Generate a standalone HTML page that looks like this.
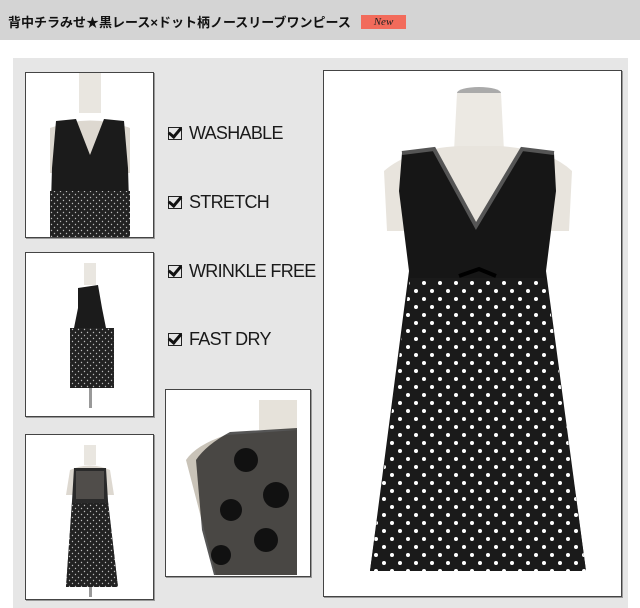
<!DOCTYPE html>
<html><head><meta charset="utf-8"><style>
body{margin:0;width:640px;height:602px;background:#fff;position:relative;overflow:hidden;font-family:"Liberation Sans","Noto Sans CJK JP",sans-serif}
.hdr{position:absolute;left:0;top:0;width:640px;height:40px;background:#d4d4d4}
.hdr .t{position:absolute;left:8px;top:12px;font-size:13px;font-weight:bold;color:#111}
.new{position:absolute;left:361px;top:15px;width:45px;height:14px;background:#f26b5b;color:#222;font-family:"Liberation Serif",serif;font-style:italic;font-size:11px;text-align:center;line-height:14px}
.panel{position:absolute;left:13px;top:58px;width:615px;height:550px;background:#e6e6e6}
.f{position:absolute;background:#fff;border:1px solid #444;box-shadow:1px 1px 0 #999;overflow:hidden}
.f svg{position:absolute;left:0;top:0}
.feat{position:absolute;left:168px;font-size:18px;color:#1a1a1a;letter-spacing:-0.7px;white-space:nowrap}
.cb{display:inline-block;width:12px;height:11px;border:1.5px solid #222;vertical-align:-1px;margin-right:7px;position:relative}
.cb:after{content:"";position:absolute;left:2px;top:-3px;width:5px;height:10px;border-right:3px solid #111;border-bottom:3px solid #111;transform:rotate(40deg)}
</style></head><body>
<div class="hdr"><div class="t">背中チラみせ★黒レース×ドット柄ノースリーブワンピース</div><div class="new">New</div></div>
<div class="panel"></div>
<svg width="0" height="0" style="position:absolute"><defs>
<pattern id="dots" width="16" height="16" patternUnits="userSpaceOnUse"><rect width="16" height="16" fill="#1a1a1a"/><circle cx="4" cy="4" r="2" fill="#fff"/><circle cx="12" cy="12" r="2" fill="#fff"/></pattern>
<pattern id="sdots" width="6" height="6" patternUnits="userSpaceOnUse"><rect width="6" height="6" fill="#222"/><circle cx="1.5" cy="1.5" r=".7" fill="#bbb"/><circle cx="4.5" cy="4.5" r=".7" fill="#bbb"/></pattern>
</defs></svg>

<div class="f" style="left:25px;top:72px;width:127px;height:164px">
<svg width="127" height="164"><rect x="53" y="0" width="22" height="40" fill="#e9e6e0"/>
<path d="M24 55 Q64 40 104 55 L104 100 L24 100 Z" fill="#ddd8d0"/>
<path d="M30 48 L50 46 L64 82 L78 46 L98 48 L102 95 L104 164 L24 164 L26 95 Z" fill="#1b1b1b"/>
<rect x="24" y="118" width="80" height="46" fill="url(#sdots)"/></svg></div>
<div class="f" style="left:25px;top:252px;width:127px;height:163px">
<svg width="127" height="163"><rect x="58" y="10" width="12" height="22" fill="#e9e6e0"/>
<path d="M52 35 L72 32 L76 55 L80 75 L88 135 L44 135 L48 75 L52 55 Z" fill="#1b1b1b"/>
<rect x="44" y="75" width="44" height="60" fill="url(#sdots)"/><rect x="63" y="135" width="3" height="20" fill="#999"/></svg></div>
<div class="f" style="left:25px;top:434px;width:127px;height:164px">
<svg width="127" height="164"><rect x="58" y="10" width="12" height="20" fill="#e9e6e0"/>
<path d="M44 35 Q64 26 84 35 L88 60 L40 60 Z" fill="#ddd8d0"/>
<path d="M48 33 L80 33 L82 66 L92 152 L40 152 L46 66 Z" fill="#2a2a2a"/>
<rect x="50" y="36" width="28" height="28" fill="#6a6560" opacity=".6"/>
<path d="M46 68 L82 68 L92 152 L40 152 Z" fill="url(#sdots)"/><rect x="63" y="152" width="3" height="10" fill="#999"/></svg></div>
<div class="f" style="left:165px;top:389px;width:144px;height:186px">
<svg width="144" height="186"><rect x="93" y="10" width="38" height="30" fill="#e6e2da"/>
<path d="M20 70 Q30 55 60 45 L131 40 L131 185 L50 185 Z" fill="#c9c3b8"/>
<path d="M30 70 Q40 55 64 42 L131 38 L131 185 L48 185 L36 140 Z" fill="#1e1e1e" opacity=".75"/>
<g fill="#111"><circle cx="80" cy="70" r="12"/><circle cx="110" cy="105" r="13"/><circle cx="65" cy="120" r="11"/><circle cx="100" cy="150" r="12"/><circle cx="55" cy="165" r="10"/></g></svg></div>

<div class="feat" style="top:123px"><span class="cb"></span>WASHABLE</div>
<div class="feat" style="top:192px"><span class="cb"></span>STRETCH</div>
<div class="feat" style="top:261px"><span class="cb"></span>WRINKLE FREE</div>
<div class="feat" style="top:329px"><span class="cb"></span>FAST DRY</div>

<div class="f" style="left:323px;top:70px;width:297px;height:525px">
<svg width="297" height="525"><ellipse cx="155" cy="22" rx="22" ry="6" fill="#aaa"/>
<path d="M133 22 L177 22 L180 80 L130 80 Z" fill="#ece9e3"/>
<path d="M60 100 Q85 78 135 75 L175 75 Q225 78 248 100 L245 160 L63 160 Z" fill="#e8e4dd"/>
<path d="M78 82 L110 78 L152 155 L198 78 L230 82 L232 120 L222 200 L262 500 L46 500 L85 200 L75 120 Z" fill="#161616"/>
<path d="M78 82 L110 78 L152 155 L198 78 L230 82" fill="none" stroke="#555" stroke-width="4"/>
<path d="M86 207 L222 207 L262 500 L46 500 Z" fill="url(#dots)"/>
<path d="M135 205 L155 198 L172 205" fill="none" stroke="#000" stroke-width="4"/></svg></div>
</body></html>
